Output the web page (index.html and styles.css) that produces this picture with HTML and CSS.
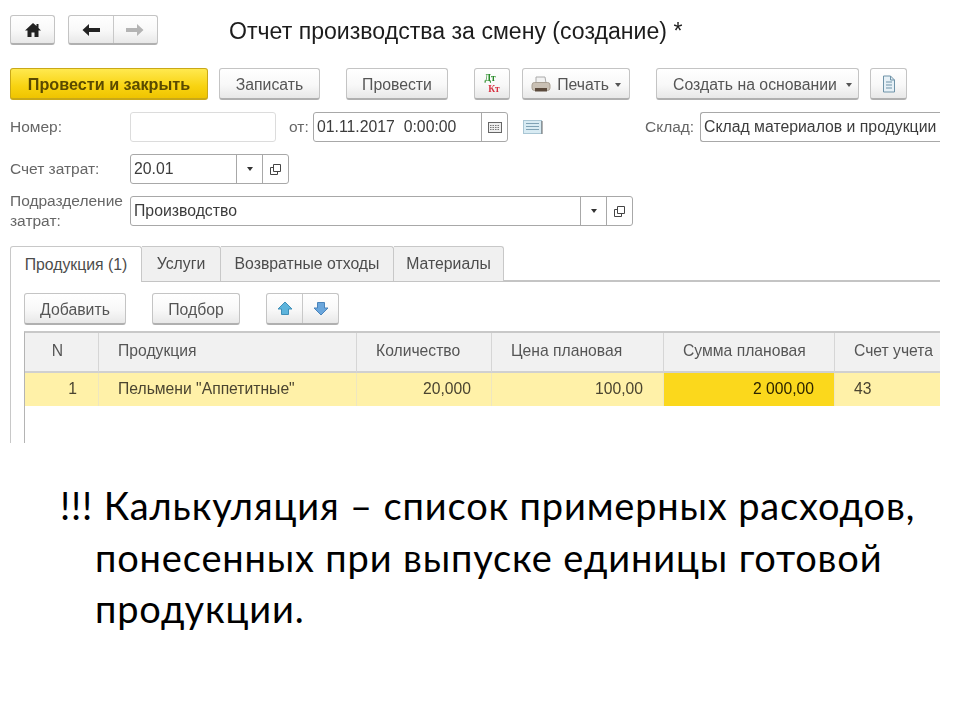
FILE: index.html
```html
<!DOCTYPE html>
<html lang="ru">
<head>
<meta charset="utf-8">
<title>Отчет производства за смену</title>
<link rel="stylesheet" href="styles.css">
</head>
<body>
<main class="page">
  <section class="form">
    <header class="titlebar">
      <button class="btn home" aria-label="Домой"><svg width="18" height="16" viewBox="0 0 18 16"><path d="M9 1 1 8.5h2.5V15h4v-4.5h3V15h4V8.5H17L14.5 6V2h-2v2z" fill="#222"/></svg></button>
      <div class="btn nav">
        <span class="nav-cell"><svg width="20" height="14" viewBox="0 0 20 14"><path d="M8 1 1.5 7 8 13V9h11V5H8z" fill="#222"/></svg></span>
        <span class="nav-cell"><svg width="20" height="14" viewBox="0 0 20 14"><path d="M12 1l6.5 6L12 13V9H1V5h11z" fill="#b4b4b4"/></svg></span>
      </div>
      <h1 class="title">Отчет производства за смену (создание) *</h1>
    </header>

    <div class="toolbar">
      <button class="btn primary w-close">Провести и закрыть</button>
      <button class="btn w-save">Записать</button>
      <button class="btn w-post">Провести</button>
      <button class="btn w-dk"><span class="dk"><span class="dt">Дт</span><span class="kt">Кт</span></span></button>
      <button class="btn w-print">
        <svg width="20" height="18" viewBox="0 0 20 18"><path d="M5 1h9l1 6H5z" fill="#f2f2f2" stroke="#aaa"/><rect x="1" y="6.5" width="18" height="8" rx="2.5" fill="#c9c0b4" stroke="#a89f92"/><rect x="4" y="12" width="12" height="3.5" fill="#5b4a3c"/></svg>
        <span>Печать</span><i class="caret"></i>
      </button>
      <button class="btn w-create"><span>Создать на основании</span><i class="caret"></i></button>
      <button class="btn w-doc"><svg width="14" height="18" viewBox="0 0 14 18"><path d="M1.5 1h7l4 4v12h-11z" fill="#e6f0f6" stroke="#6f93a8"/><path d="M4 7h6M4 10h6M4 13h6M8.5 1v4h4" fill="none" stroke="#6f93a8"/></svg></button>
    </div>

    <div class="row row-first">
      <label class="label">Номер:</label>
      <div class="field number"></div>
      <span class="label from">от:</span>
      <div class="field date">
        <span class="value">01.11.2017&nbsp; 0:00:00</span>
        <span class="cell"><svg width="14" height="11" viewBox="0 0 14 11"><rect x=".5" y=".5" width="13" height="10" fill="#eee" stroke="#666"/><path d="M2 3.5h10M2 5.5h10M2 7.5h10" stroke="#777" stroke-dasharray="1.5 1"/></svg></span>
      </div>
      <svg class="memo" width="20" height="14" viewBox="0 0 20 14"><rect x=".5" y=".5" width="18" height="13" fill="#d8ebf3" stroke="#a9c6d4"/><path d="M3 3.5h13M3 6.5h13M3 9.5h13" stroke="#7fa2b5"/><path d="M19 1v13" stroke="#666"/></svg>
      <span class="label store">Склад:</span>
      <div class="field storefield"><span class="value">Склад материалов и продукции</span></div>
    </div>

    <div class="row">
      <label class="label">Счет затрат:</label>
      <div class="field account">
        <span class="value">20.01</span>
        <span class="cell"><i class="caret dark"></i></span>
        <span class="cell"><svg width="13" height="13" viewBox="0 0 13 13"><path d="M4.5 1.5h7v7h-7z" fill="#fff" stroke="#444"/><path d="M4.5 4.5h-3v7h7v-3" fill="none" stroke="#444"/></svg></span>
      </div>
    </div>

    <div class="row">
      <label class="label twoline">Подразделение затрат:</label>
      <div class="field division">
        <span class="value">Производство</span>
        <span class="cell"><i class="caret dark"></i></span>
        <span class="cell"><svg width="13" height="13" viewBox="0 0 13 13"><path d="M4.5 1.5h7v7h-7z" fill="#fff" stroke="#444"/><path d="M4.5 4.5h-3v7h7v-3" fill="none" stroke="#444"/></svg></span>
      </div>
    </div>

    <nav class="tabs">
      <span class="tab active t1">Продукция (1)</span>
      <span class="tab t2">Услуги</span>
      <span class="tab t3">Возвратные отходы</span>
      <span class="tab t4">Материалы</span>
    </nav>

    <div class="panel">
      <div class="table-tools">
        <button class="btn w-add">Добавить</button>
        <button class="btn w-pick">Подбор</button>
        <div class="btn updown">
          <span class="nav-cell"><svg width="16" height="15" viewBox="0 0 16 15"><path d="M8 1 1 8h3.5v5.5h7V8H15z" fill="#5db4dc" stroke="#3f8fb8"/></svg></span>
          <span class="nav-cell"><svg width="16" height="15" viewBox="0 0 16 15"><path d="M4.5 1.5h7V7H15l-7 7-7-7h3.5z" fill="#6aa6dc" stroke="#4a84bb"/></svg></span>
        </div>
      </div>
      <div class="grid">
        <div class="th c-n center">N</div>
        <div class="th">Продукция</div>
        <div class="th">Количество</div>
        <div class="th">Цена плановая</div>
        <div class="th">Сумма плановая</div>
        <div class="th">Счет учета</div>
        <div class="td num n1">1</div>
        <div class="td">Пельмени "Аппетитные"</div>
        <div class="td num">20,000</div>
        <div class="td num">100,00</div>
        <div class="td num current">2 000,00</div>
        <div class="td">43</div>
      </div>
    </div>
  </section>

  <p class="note">!!! Калькуляция – список примерных расходов, понесенных при выпуске единицы готовой продукции.</p>
</main>
</body>
</html>
```

FILE: styles.css
```css
* { box-sizing: border-box; }
html, body { margin: 0; padding: 0; background: #fff; }
body { font-family: "Liberation Sans", Arial, sans-serif; color: #444; }
.page { width: 960px; height: 720px; overflow: hidden; }
.form { width: 940px; height: 443px; padding: 15px 0 0 10px; overflow: hidden; filter: blur(.3px); }

.btn {
  display: flex; align-items: center; justify-content: center; gap: 6px;
  margin: 0; padding: 2px 0 0; height: 32px;
  font: 15.8px "Liberation Sans", Arial, sans-serif; color: #555;
  background: linear-gradient(#fff 0%, #f8f8f8 55%, #e8e8e8 100%);
  border: 1px solid #c4c4c4; border-bottom: 2px solid #b0b0b0; border-radius: 3px;
}
.titlebar { display: flex; align-items: center; height: 30px; }
.titlebar .btn { height: 30px; padding: 0; }
.home { width: 45px; }
.nav { width: 90px; margin-left: 13px; gap: 0; }
.nav-cell { flex: 1; height: 100%; display: flex; align-items: center; justify-content: center; }
.nav-cell + .nav-cell { border-left: 1px solid #c8c8c8; }
.updown { padding: 0; }
.title { margin: 3px 0 0 71px; font-size: 23.1px; font-weight: 400; color: #1c1c1c; white-space: nowrap; }

.toolbar { display: flex; margin-top: 23px; height: 32px; }
.primary { background: linear-gradient(#ffe94f, #f8d311 60%, #efc400); border-color: #c9a818; color: #5a4a00; font-weight: 700; font-size: 16.2px; }
.w-close { width: 198px; }
.w-save { width: 101px; margin-left: 11px; }
.w-post { width: 102px; margin-left: 26px; }
.w-dk { width: 36px; margin-left: 26px; padding: 0; }
.w-print { width: 108px; margin-left: 12px; }
.w-create { width: 203px; margin-left: 26px; gap: 9px; padding-left: 10px; }
.w-doc { width: 37px; margin-left: 11px; padding: 0; }
.caret { width: 0; height: 0; border: 3.5px solid transparent; border-top: 4px solid #555; border-bottom: 0; display: block; }
.caret.dark { border-top-color: #333; }
.dk { display: flex; flex-direction: column; font: 700 9.5px/10.5px "Liberation Serif", serif; }
.dt { color: #2a8c2a; margin-left: -4px; }
.kt { color: #d83040; margin-left: 4px; }

.row { display: flex; align-items: center; height: 30px; margin-top: 12px; }
.row-first { margin-top: 12px; }
.label { font-size: 15.5px; color: #666; width: 120px; flex: none; }
.twoline { line-height: 20px; }
.field {
  display: flex; align-items: stretch; height: 30px; background: #fff;
  border: 1px solid #a8a8a8; border-radius: 3px; flex: none; font-size: 15.8px; color: #3c3c3c;
}
.value { flex: 1; display: flex; align-items: center; padding-left: 3px; white-space: nowrap; overflow: hidden; }
.cell { width: 26px; flex: none; display: flex; align-items: center; justify-content: center; border-left: 1px solid #a8a8a8; }
.number { width: 146px; border-color: #dcdcdc; }
.from { width: 24px; margin-left: 13px; }
.date { width: 195px; }
.memo { margin-left: 15px; flex: none; }
.store { width: 55px; margin-left: 102px; }
.storefield { width: 240px; border-right: 0; border-radius: 3px 0 0 3px; }
.account { width: 159px; }
.division { width: 503px; }

.tabs { display: flex; height: 36px; margin-top: 20px; border-bottom: 2px solid #c4c4c4; }
.tab {
  height: 35px; display: flex; align-items: center; justify-content: center;
  font-size: 15.8px; color: #4c4c4c; background: #f0f0f0;
  border: 1px solid #c8c8c8; border-left: 0; border-bottom: 0; border-radius: 0 3px 0 0;
}
.tab.active { background: #fff; height: 36px; border-left: 1px solid #c8c8c8; border-radius: 3px 3px 0 0; position: relative; z-index: 1; }
.t1 { width: 132px; }
.t2 { width: 79px; }
.t3 { width: 173px; }
.t4 { width: 110px; }

.panel { border-left: 1px solid #c8c8c8; padding-left: 13px; height: 200px; }
.table-tools { display: flex; padding-top: 11px; height: 49px; }
.w-add { width: 102px; }
.w-pick { width: 88px; margin-left: 26px; }
.updown { width: 73px; margin-left: 26px; gap: 0; }

.grid {
  display: grid;
  grid-template-columns: 74px 258px 135px 172px 171px 120px;
  grid-template-rows: 40px 33px;
  align-content: start;
  width: 916px; height: 151px;
  border-top: 2px solid #c8c8c8; border-left: 1px solid #b4b4b4;
  font-size: 15.7px;
}
.th {
  display: flex; align-items: center; padding: 0 0 2px 19px; background: #f1f1f1; color: #555;
  border-right: 1px solid #d6d6d6; border-bottom: 2px solid #d0d0d0; white-space: nowrap;
}
.center { justify-content: center; padding: 0 8px 2px 0; }
.td {
  display: flex; align-items: center; padding: 0 0 2px 19px; background: #fff1a8; color: #4a4430;
  border-right: 1px solid #eee6c0; white-space: nowrap;
}
.num { justify-content: flex-end; padding: 0 20px 2px 0; }
.n1 { padding-right: 21px; }
.current { background: #fbd81c; color: #2c2400; }

.note {
  margin: 37px 0 0 0; padding: 0 20px 0 95px; text-indent: -35px;
  font-family: Lato, "Open Sans", sans-serif; font-size: 38px; letter-spacing: .84px; line-height: 51.5px; color: #000;
}
```
